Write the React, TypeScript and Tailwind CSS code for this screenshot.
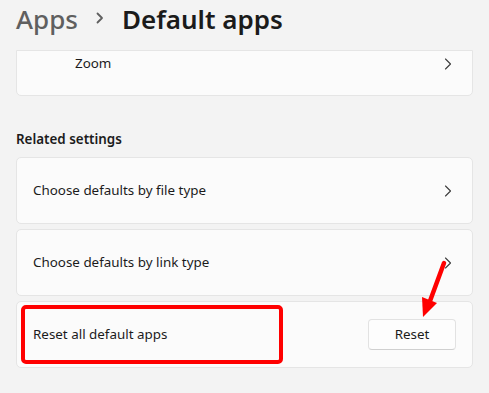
import React from 'react';

function Chevron({ className = '' }: { className?: string }) {
  return (
    <svg width="8" height="12" viewBox="0 0 8 12" fill="none" className={className}>
      <path d="M1.5 1 L6.5 6 L1.5 11" stroke="#3b3b3b" strokeWidth="1.1" strokeLinecap="round" strokeLinejoin="round" />
    </svg>
  );
}

function LinkCard({ label }: { label: string }) {
  return (
    <div className="h-[67px] mx-4 flex items-center justify-between pl-[16px] pr-[20px] bg-[#fbfbfb] border border-[#e5e5e5] rounded-[5px]">
      <span className="text-[13.4px] text-[#1b1b1b]">{label}</span>
      <Chevron />
    </div>
  );
}

export default function App() {
  return (
    <div className="relative w-[489px] h-[393px] overflow-hidden bg-[#f3f3f3] font-['Noto_Sans',sans-serif]">
      {/* Title */}
      <div className="h-[50px] pl-4 pt-px flex items-start gap-[18px] leading-[36px] text-[26px]">
        <span className="font-medium text-[#5f5f5f]">Apps</span>
        <svg width="8" height="12" viewBox="0 0 8 12" fill="none" className="mt-[11px]">
          <path d="M1.5 1.5 L6 6 L1.5 10.5" stroke="#5f5f5f" strokeWidth="1.8" strokeLinecap="round" strokeLinejoin="round" />
        </svg>
        <span className="font-semibold text-[#1b1b1b]">Default apps</span>
      </div>

      {/* Zoom card (scrolled) */}
      <div className="h-[46px] mx-4 flex items-start justify-between pl-[58px] pr-[20px] pt-[2px] bg-[#fbfbfb] border border-[#e5e5e5] rounded-b-[5px]">
        <span className="text-[13.4px] leading-[20px] text-[#1b1b1b]">Zoom</span>
        <Chevron className="mt-[5px]" />
      </div>

      <div className="mt-[33px] mb-[8px] pl-4 text-[13.4px] leading-[20px] font-semibold text-[#1b1b1b]">
        Related settings
      </div>

      <div className="flex flex-col gap-[5px]">
        <LinkCard label="Choose defaults by file type" />
        <LinkCard label="Choose defaults by link type" />
        <div className="h-[67px] mx-4 flex items-center justify-between pl-[16px] pr-[16px] bg-[#fbfbfb] border border-[#e5e5e5] rounded-[5px]">
          <span className="text-[13.4px] text-[#1b1b1b]">Reset all default apps</span>
          <button className="w-[88px] h-[31px] text-[13.4px] text-[#1b1b1b] bg-[#fdfdfd] border border-[#e2e2e2] border-b-[#d0d0d0] rounded-[4px]">
            Reset
          </button>
        </div>
      </div>

      {/* annotation: red box */}
      <div className="absolute left-[21px] top-[305px] w-[262px] h-[59px] border-4 border-[#ff0000] rounded-[5px]" />

      {/* annotation: red arrow */}
      <svg className="absolute left-0 top-0" width="489" height="393" viewBox="0 0 489 393">
        <line x1="444" y1="263" x2="430" y2="301" stroke="#ff0000" strokeWidth="4.5" strokeLinecap="round" />
        <polygon points="423,317 437,303 422,297" fill="#ff0000" />
      </svg>
    </div>
  );
}
